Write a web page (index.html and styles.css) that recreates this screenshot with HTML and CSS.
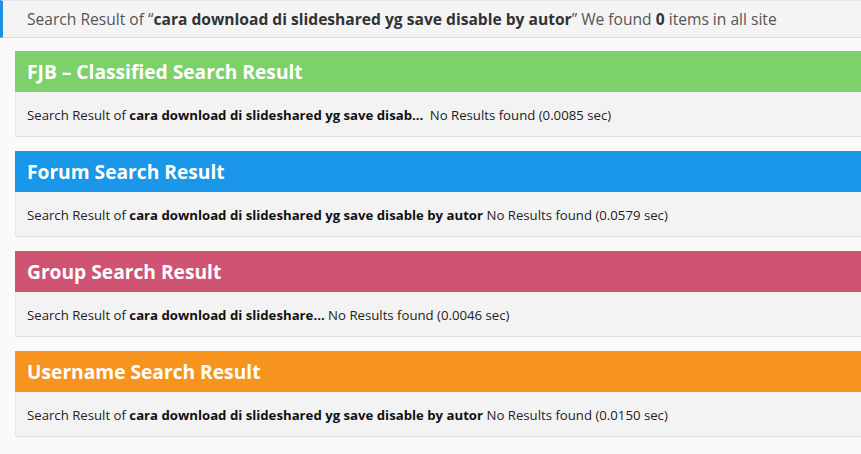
FILE: index.html
```html
<!DOCTYPE html>
<html>
<head>
<meta charset="utf-8">
<link rel="stylesheet" href="styles.css">
</head>
<body>
<div class="page">
  <div class="summary">Search Result of “<b>cara download di slideshared yg save disable by autor</b>” We found <b>0</b> items in all site</div>
  <div class="sections">
    <section class="result">
      <h2 class="result-head green">FJB – Classified Search Result</h2>
      <div class="result-body">Search Result of <b>cara download di slideshared yg save disab...</b> <span class="gap">No Results found (0.0085 sec)</span></div>
    </section>
    <section class="result">
      <h2 class="result-head blue">Forum Search Result</h2>
      <div class="result-body">Search Result of <b>cara download di slideshared yg save disable by autor</b> No Results found (0.0579 sec)</div>
    </section>
    <section class="result">
      <h2 class="result-head pink">Group Search Result</h2>
      <div class="result-body">Search Result of <b>cara download di slideshare...</b> No Results found (0.0046 sec)</div>
    </section>
    <section class="result">
      <h2 class="result-head orange">Username Search Result</h2>
      <div class="result-body">Search Result of <b>cara download di slideshared yg save disable by autor</b> No Results found (0.0150 sec)</div>
    </section>
  </div>
</div>
</body>
</html>
```

FILE: styles.css
```css
html, body {
  margin: 0;
  padding: 0;
  background: #fafafa;
}
body {
  font-family: "Open Sans", "Liberation Sans", sans-serif;
  color: #222;
  width: 861px;
  height: 454px;
  overflow: hidden;
}
.page {
  display: flex;
  flex-direction: column;
}
.summary {
  height: 38px;
  box-sizing: border-box;
  border-top: 1px solid #e6e6e6;
  border-bottom: 1px solid #dcdcdc;
  border-left: 3px solid #1e8fe0;
  background: #f4f4f4;
  padding: 2px 0 0 24px;
  font-size: 15.6px;
  line-height: 33px;
  color: #555;
  white-space: nowrap;
}
.summary b {
  color: #333;
}
.sections {
  display: flex;
  flex-direction: column;
  gap: 14px;
  padding: 13px 0 0 15px;
}
.result {
  display: flex;
  flex-direction: column;
}
.result-head {
  margin: 0;
  height: 41px;
  padding: 0 0 0 12px;
  font-size: 19.2px;
  font-weight: 700;
  line-height: 42px;
  color: #fff;
}
.green { background: #7dd16b; }
.blue { background: #1a97e8; }
.pink { background: #cf5372; }
.orange { background: #f6941f; }
.result-body {
  height: 45px;
  box-sizing: border-box;
  background: #f3f3f3;
  border-left: 1px solid #e8e8e8;
  border-bottom: 1px solid #dddddd;
  padding: 2px 0 0 11px;
  font-size: 13.2px;
  line-height: 42px;
  color: #222;
  white-space: nowrap;
}
.result-body b {
  color: #111;
}
.gap {
  margin-left: 3px;
}
```
